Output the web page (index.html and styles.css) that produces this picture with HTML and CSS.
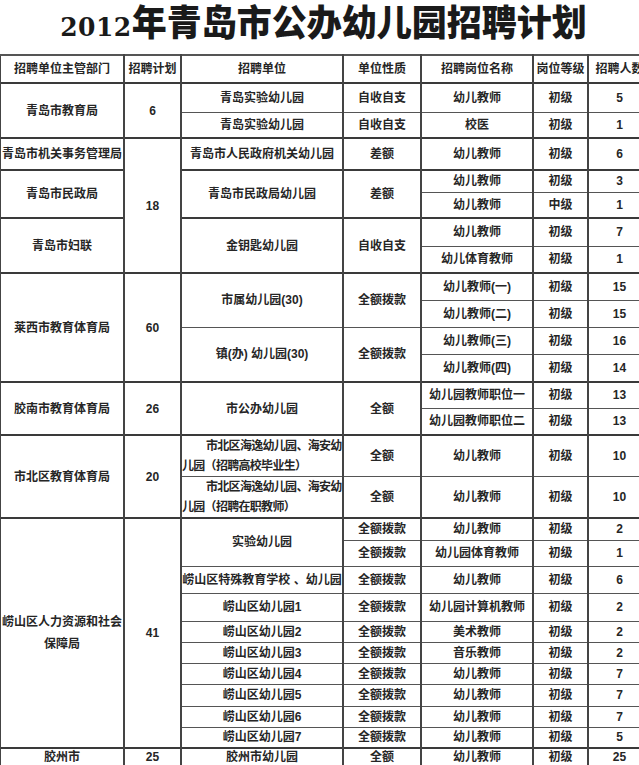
FILE: index.html
```html
<!DOCTYPE html>
<html lang="zh-CN">
<head>
<meta charset="utf-8">
<title>2012年青岛市公办幼儿园招聘计划</title>
<link rel="stylesheet" href="styles.css">
</head>
<body>
<div class="page">
  <h1 class="title"><span class="yr">2012</span>年青岛市公办幼儿园招聘计划</h1>
  <table class="plan">
    <colgroup>
      <col class="c1"><col class="c2"><col class="c3"><col class="c4"><col class="c5"><col class="c6"><col class="c7">
    </colgroup>
    <tr class="h28 hd">
      <td>招聘单位主管部门</td><td>招聘计划</td><td>招聘单位</td><td>单位性质</td><td>招聘岗位名称</td><td>岗位等级</td><td>招聘人数</td>
    </tr>
    <tr class="h29 g">
      <td rowspan="2">青岛市教育局</td><td rowspan="2">6</td><td>青岛实验幼儿园</td><td>自收自支</td><td>幼儿教师</td><td>初级</td><td>5</td>
    </tr>
    <tr class="h26">
      <td>青岛实验幼儿园</td><td>自收自支</td><td>校医</td><td>初级</td><td>1</td>
    </tr>
    <tr class="h32 g">
      <td>青岛市机关事务管理局</td><td rowspan="5">18</td><td>青岛市人民政府机关幼儿园</td><td>差额</td><td>幼儿教师</td><td>初级</td><td>6</td>
    </tr>
    <tr class="h22 g">
      <td rowspan="2">青岛市民政局</td><td rowspan="2">青岛市民政局幼儿园</td><td rowspan="2">差额</td><td>幼儿教师</td><td>初级</td><td>3</td>
    </tr>
    <tr class="h26">
      <td>幼儿教师</td><td>中级</td><td>1</td>
    </tr>
    <tr class="h28 g">
      <td rowspan="2">青岛市妇联</td><td rowspan="2">金钥匙幼儿园</td><td rowspan="2">自收自支</td><td>幼儿教师</td><td>初级</td><td>7</td>
    </tr>
    <tr class="h27">
      <td>幼儿体育教师</td><td>初级</td><td>1</td>
    </tr>
    <tr class="h27 g">
      <td rowspan="4">莱西市教育体育局</td><td rowspan="4">60</td><td rowspan="2">市属幼儿园(30)</td><td rowspan="2">全额拨款</td><td>幼儿教师(一)</td><td>初级</td><td>15</td>
    </tr>
    <tr class="h27">
      <td>幼儿教师(二)</td><td>初级</td><td>15</td>
    </tr>
    <tr class="h27">
      <td rowspan="2">镇(办) 幼儿园(30)</td><td rowspan="2">全额拨款</td><td>幼儿教师(三)</td><td>初级</td><td>16</td>
    </tr>
    <tr class="h28">
      <td>幼儿教师(四)</td><td>初级</td><td>14</td>
    </tr>
    <tr class="h26 g">
      <td rowspan="2">胶南市教育体育局</td><td rowspan="2">26</td><td rowspan="2">市公办幼儿园</td><td rowspan="2">全额</td><td>幼儿园教师职位一</td><td>初级</td><td>13</td>
    </tr>
    <tr class="h27">
      <td>幼儿园教师职位二</td><td>初级</td><td>13</td>
    </tr>
    <tr class="h40 g">
      <td rowspan="2">市北区教育体育局</td><td rowspan="2">20</td><td class="wrap">市北区海逸幼儿园、海安幼<br>儿园（招聘高校毕业生）</td><td>全额</td><td>幼儿教师</td><td>初级</td><td>10</td>
    </tr>
    <tr class="h40">
      <td class="wrap">市北区海逸幼儿园、海安幼<br>儿园（招聘在职教师）</td><td>全额</td><td>幼儿教师</td><td>初级</td><td>10</td>
    </tr>
    <tr class="h22 g">
      <td rowspan="10" class="two">崂山区人力资源和社会<br>保障局</td><td rowspan="10">41</td><td rowspan="2">实验幼儿园</td><td>全额拨款</td><td>幼儿教师</td><td>初级</td><td>2</td>
    </tr>
    <tr class="h26">
      <td>全额拨款</td><td>幼儿园体育教师</td><td>初级</td><td>1</td>
    </tr>
    <tr class="h27">
      <td>崂山区特殊教育学校 、幼儿园</td><td>全额拨款</td><td>幼儿教师</td><td>初级</td><td>6</td>
    </tr>
    <tr class="h28">
      <td>崂山区幼儿园1</td><td>全额拨款</td><td>幼儿园计算机教师</td><td>初级</td><td>2</td>
    </tr>
    <tr class="h21">
      <td>崂山区幼儿园2</td><td>全额拨款</td><td>美术教师</td><td>初级</td><td>2</td>
    </tr>
    <tr class="h21">
      <td>崂山区幼儿园3</td><td>全额拨款</td><td>音乐教师</td><td>初级</td><td>2</td>
    </tr>
    <tr class="h21">
      <td>崂山区幼儿园4</td><td>全额拨款</td><td>幼儿教师</td><td>初级</td><td>7</td>
    </tr>
    <tr class="h22">
      <td>崂山区幼儿园5</td><td>全额拨款</td><td>幼儿教师</td><td>初级</td><td>7</td>
    </tr>
    <tr class="h21">
      <td>崂山区幼儿园6</td><td>全额拨款</td><td>幼儿教师</td><td>初级</td><td>7</td>
    </tr>
    <tr class="h21">
      <td>崂山区幼儿园7</td><td>全额拨款</td><td>幼儿教师</td><td>初级</td><td>5</td>
    </tr>
    <tr class="h18 g last">
      <td>胶州市</td><td>25</td><td>胶州市幼儿园</td><td>全额</td><td>幼儿教师</td><td>初级</td><td>25</td>
    </tr>
  </table>
</div>
</body>
</html>
```
FILE: styles.css
```css
html, body {
  margin: 0;
  padding: 0;
  background: #ffffff;
  overflow: hidden;
}

.page {
  width: 639px;
  height: 765px;
  overflow: hidden;
}

.title {
  margin: 0;
  height: 54px;
  font-family: "Noto Sans CJK SC", sans-serif;
  font-weight: 900;
  font-size: 35px;
  line-height: 38px;
  color: #1a1a1a;
  text-align: center;
  white-space: nowrap;
  padding-left: 8px;
  box-sizing: border-box;
  transform: scaleY(1.05);
  transform-origin: 50% 0;
}

.yr {
  font-family: "DejaVu Serif", serif;
  font-weight: 700;
  font-size: 25px;
  letter-spacing: 0.5px;
}

.plan {
  border-collapse: collapse;
  table-layout: fixed;
  width: 651px;
  margin-left: -1px;
  font-family: "Liberation Sans", "Noto Sans CJK SC", sans-serif;
  font-weight: 700;
  font-size: 12px;
  color: #262626;
}

.c1 { width: 124px; }
.c2 { width: 57px; }
.c3 { width: 162px; }
.c4 { width: 78px; }
.c5 { width: 112px; }
.c6 { width: 55px; }
.c7 { width: 63px; }

.plan td {
  padding: 0;
  text-align: center;
  vertical-align: middle;
  white-space: nowrap;
  line-height: 16px;
  border-top: 1px solid #555555;
  border-bottom: 1px solid #555555;
  border-left: 2px solid #444444;
  border-right: 2px solid #444444;
}

.plan tr.hd td {
  border-top: 2px solid #555555;
}

.plan tr.g td {
  border-top: 2px solid #3a3a3a;
}

.plan tr.last td {
  line-height: 14px;
  vertical-align: top;
  padding-top: 1px;
}

.plan td.wrap {
  text-align: left;
  text-indent: 24px;
  letter-spacing: -0.7px;
  line-height: 20px;
  overflow: visible;
}

.plan td.two {
  line-height: 22px;
}

.h18 { height: 18px; }
.h21 { height: 21px; }
.h22 { height: 22px; }
.h26 { height: 26px; }
.h27 { height: 27px; }
.h28 { height: 28px; }
.h29 { height: 29px; }
.h32 { height: 32px; }
.h40 { height: 40px; }
```
